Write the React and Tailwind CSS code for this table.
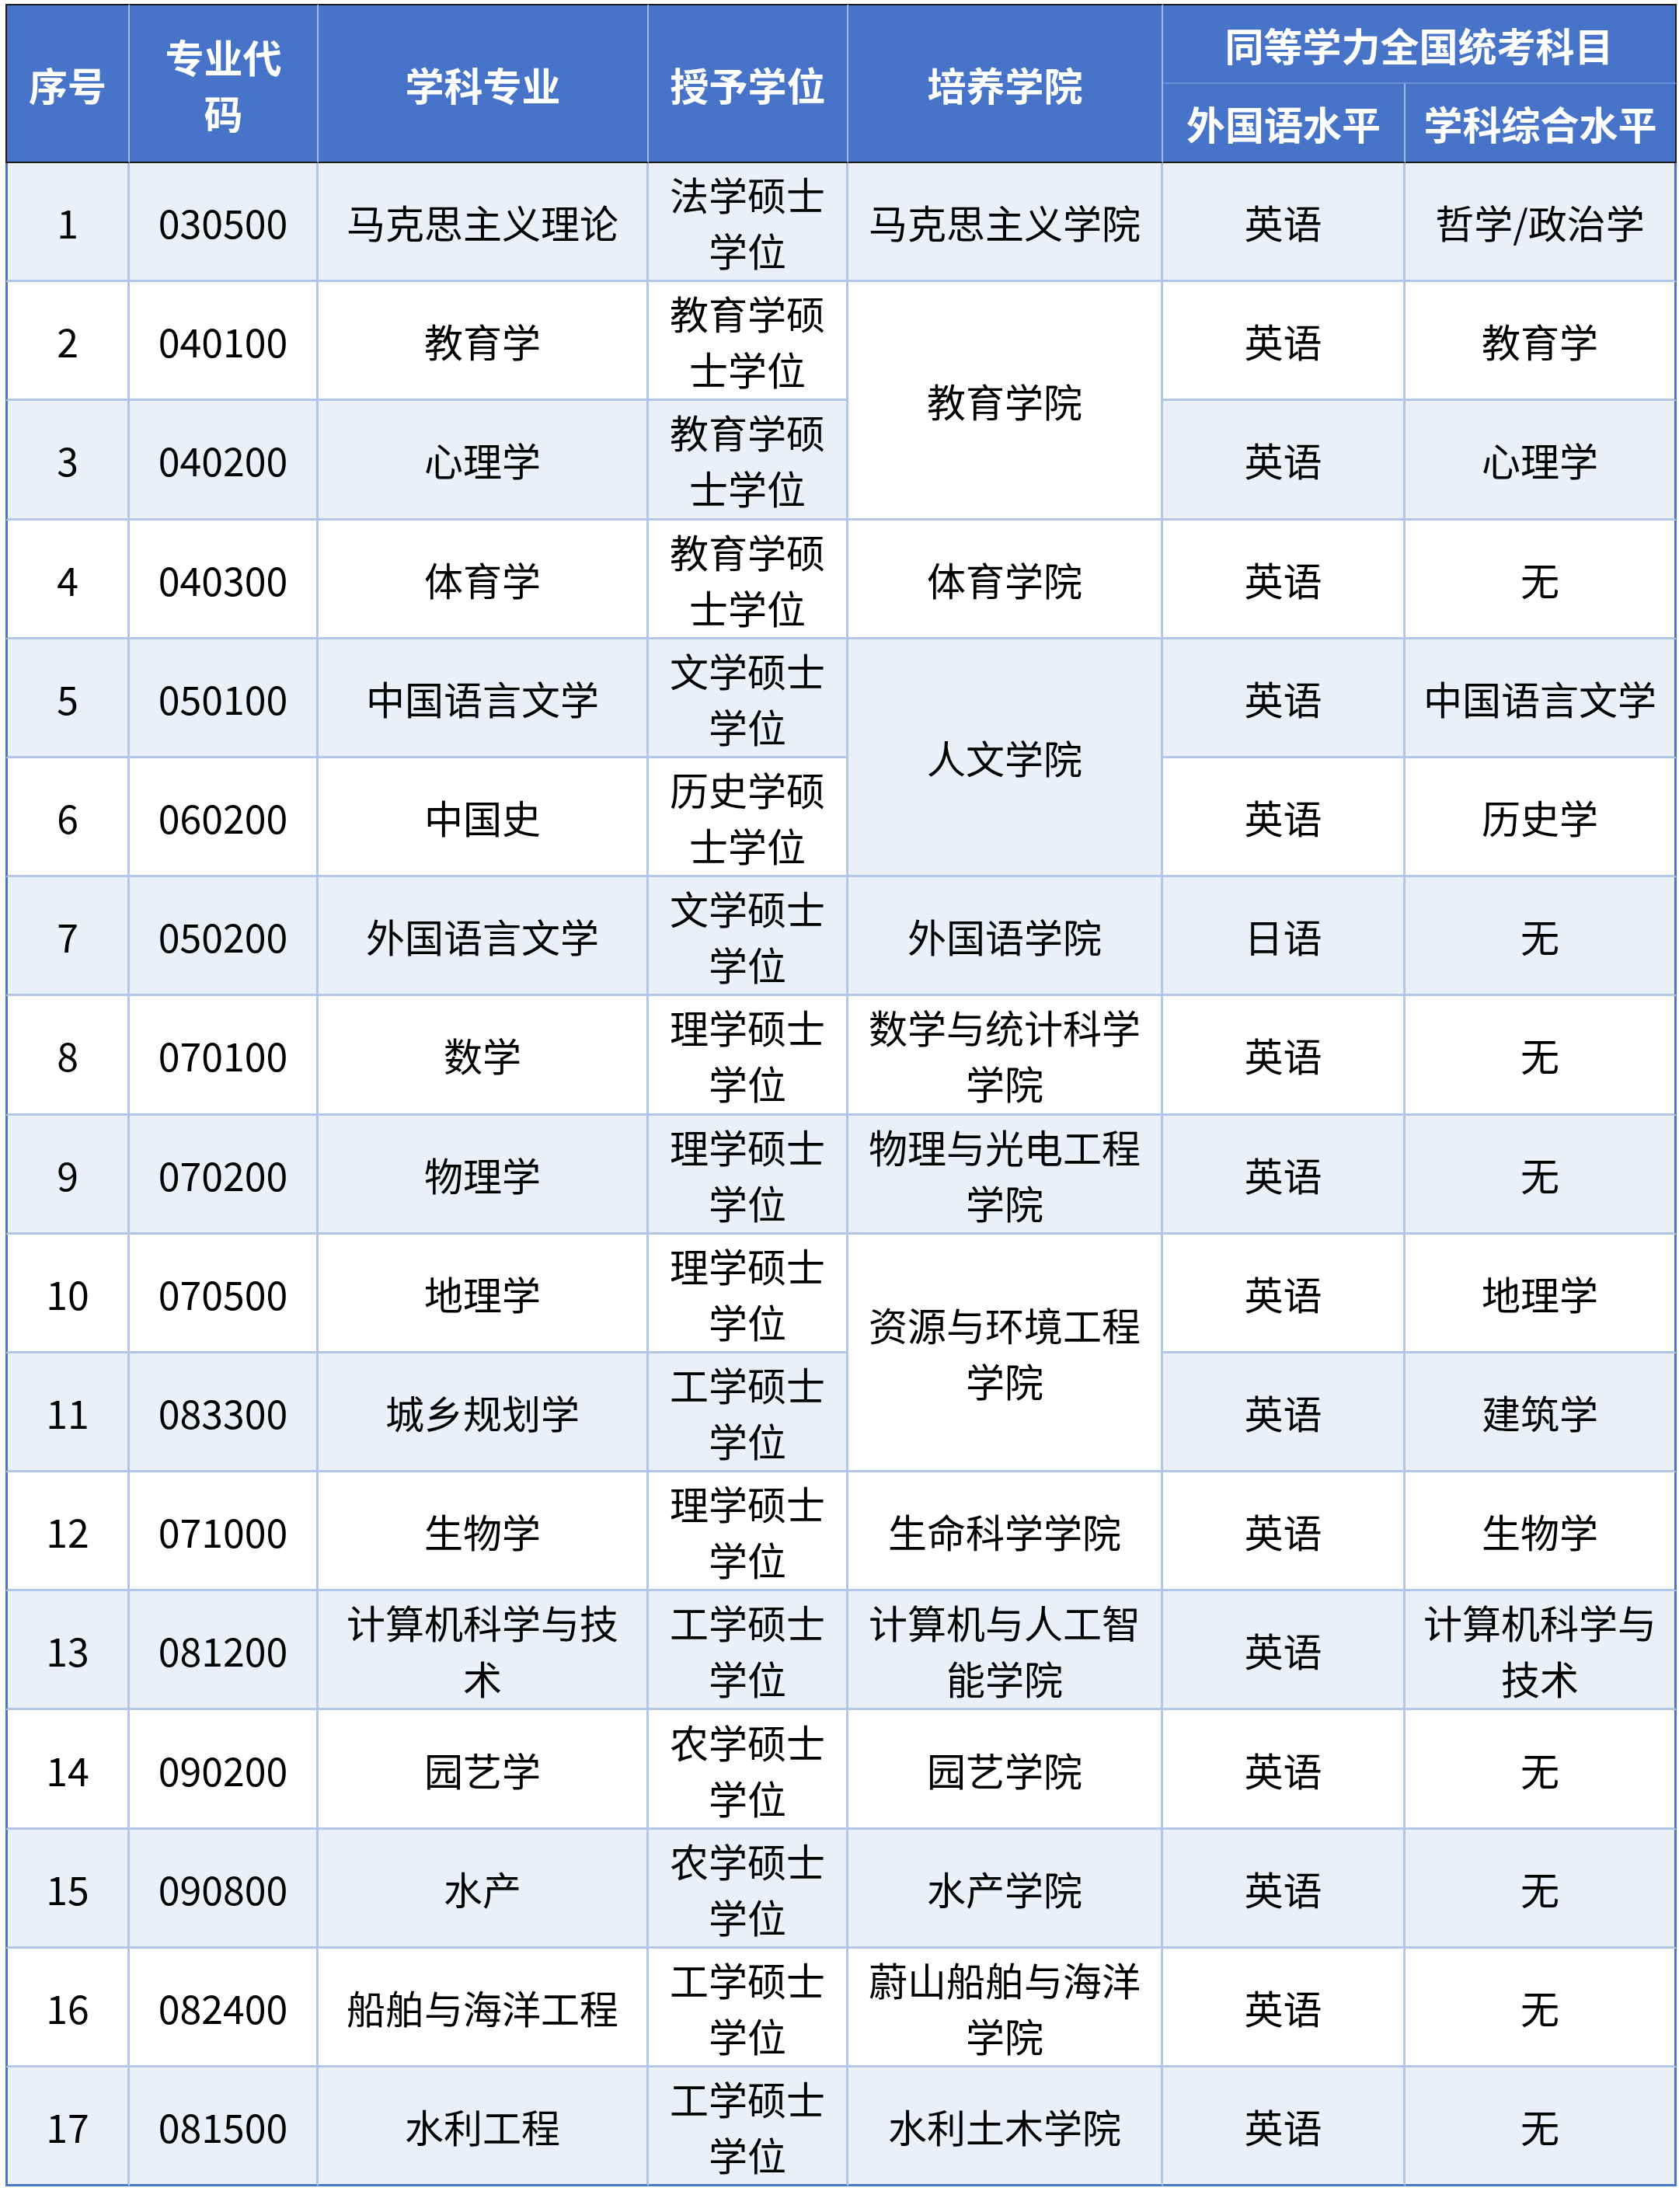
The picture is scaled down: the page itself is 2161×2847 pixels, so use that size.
import React from "react";

const rows = [
  ["1", "030500", "马克思主义理论", "法学硕士学位", "马克思主义学院", "英语", "哲学/政治学"],
  ["2", "040100", "教育学", "教育学硕士学位", { text: "教育学院", span: 2 }, "英语", "教育学"],
  ["3", "040200", "心理学", "教育学硕士学位", null, "英语", "心理学"],
  ["4", "040300", "体育学", "教育学硕士学位", "体育学院", "英语", "无"],
  ["5", "050100", "中国语言文学", "文学硕士学位", { text: "人文学院", span: 2 }, "英语", "中国语言文学"],
  ["6", "060200", "中国史", "历史学硕士学位", null, "英语", "历史学"],
  ["7", "050200", "外国语言文学", "文学硕士学位", "外国语学院", "日语", "无"],
  ["8", "070100", "数学", "理学硕士学位", "数学与统计科学学院", "英语", "无"],
  ["9", "070200", "物理学", "理学硕士学位", "物理与光电工程学院", "英语", "无"],
  ["10", "070500", "地理学", "理学硕士学位", { text: "资源与环境工程学院", span: 2 }, "英语", "地理学"],
  ["11", "083300", "城乡规划学", "工学硕士学位", null, "英语", "建筑学"],
  ["12", "071000", "生物学", "理学硕士学位", "生命科学学院", "英语", "生物学"],
  ["13", "081200", "计算机科学与技术", "工学硕士学位", "计算机与人工智能学院", "英语", "计算机科学与技术"],
  ["14", "090200", "园艺学", "农学硕士学位", "园艺学院", "英语", "无"],
  ["15", "090800", "水产", "农学硕士学位", "水产学院", "英语", "无"],
  ["16", "082400", "船舶与海洋工程", "工学硕士学位", "蔚山船舶与海洋学院", "英语", "无"],
  ["17", "081500", "水利工程", "工学硕士学位", "水利土木学院", "英语", "无"],
];

const padX = ["px-[6px]", "px-[24px]", "px-[20px]", "px-[10px]", "px-[10px]", "px-[10px]", "px-[10px]"];

export default function App() {
  const font = { fontFamily: '"Noto Sans CJK SC", "Noto Sans", sans-serif' };
  const hBase =
    "bg-[#4774c8] text-white font-bold text-center align-middle text-[50px] leading-[72px] border-b-[2px] border-r-[2px] border-r-[#a3b9e6] border-b-[#1c1c1c] border-t-[2px] border-t-[#1c1c1c]";
  return (
    <div className="bg-white w-[2161px] h-[2847px] pl-[7px] pt-[5px]" style={font}>
      <table className="border-separate border-spacing-0 table-fixed w-[2151px]">
        <colgroup>
          <col className="w-[160px]" />
          <col className="w-[243px]" />
          <col className="w-[425px]" />
          <col className="w-[257px]" />
          <col className="w-[405px]" />
          <col className="w-[312px]" />
          <col className="w-[349px]" />
        </colgroup>
        <thead>
          <tr className="h-[103px]">
            <th rowSpan={2} className={`${hBase} border-l-[2px] border-l-[#1c1c1c] px-[6px]`}>序号</th>
            <th rowSpan={2} className={`${hBase} px-[24px]`}>专业代码</th>
            <th rowSpan={2} className={`${hBase} px-[20px]`}>学科专业</th>
            <th rowSpan={2} className={`${hBase} px-[10px]`}>授予学位</th>
            <th rowSpan={2} className={`${hBase} px-[10px]`}>培养学院</th>
            <th
              colSpan={2}
              className="bg-[#4774c8] text-white font-bold text-center align-middle text-[50px] leading-[72px] border-t-[2px] border-t-[#1c1c1c] border-r-[2px] border-r-[#1c1c1c] border-b-[2px] border-b-[#6a8fd5] px-[10px]"
            >
              同等学力全国统考科目
            </th>
          </tr>
          <tr className="h-[102px]">
            <th className="bg-[#4774c8] text-white font-bold text-center align-middle text-[50px] leading-[72px] border-r-[2px] border-r-[#a3b9e6] border-b-[2px] border-b-[#1c1c1c] px-[10px]">
              外国语水平
            </th>
            <th className="bg-[#4774c8] text-white font-bold text-center align-middle text-[50px] leading-[72px] border-r-[2px] border-r-[#1c1c1c] border-b-[2px] border-b-[#1c1c1c] px-[10px]">
              学科综合水平
            </th>
          </tr>
        </thead>
        <tbody>
          {rows.map((r, ri) => {
            const light = ri % 2 === 0;
            const last = ri === rows.length - 1;
            return (
              <tr key={ri} className="h-[153.2px]">
                {r.map((c, ci) => {
                  if (c === null) return null;
                  const text = typeof c === "object" ? c.text : c;
                  const span = typeof c === "object" ? c.span : 1;
                  const endsLast = ri + span - 1 === rows.length - 1;
                  const cls = [
                    "text-center align-middle text-[50px] leading-[72px] text-black font-normal border-r-[3px] border-b-[3px]",
                    padX[ci],
                    light ? "bg-[#eaeff8]" : "bg-white",
                    ci === 0 ? "border-l-[3px] border-l-[#4a76c9]" : "",
                    ci === 6 ? "border-r-[#4a76c9]" : "border-r-[#b4c6e7]",
                    last || endsLast ? "border-b-[#4a76c9]" : "border-b-[#b4c6e7]",
                  ].join(" ");
                  return (
                    <td key={ci} rowSpan={span} className={cls}>
                      {text}
                    </td>
                  );
                })}
              </tr>
            );
          })}
        </tbody>
      </table>
    </div>
  );
}
